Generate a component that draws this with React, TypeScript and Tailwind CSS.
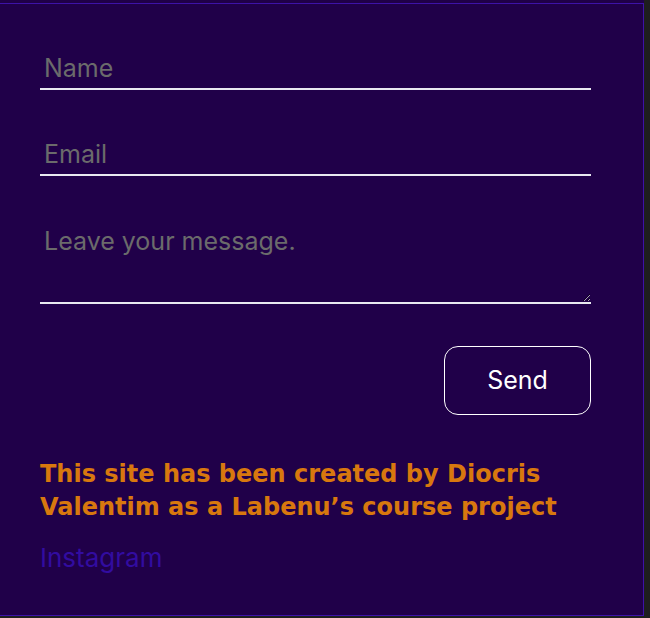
import React from "react";

export default function App() {
  return (
    <div className="w-[650px] h-[618px] bg-[#1e1e1e] overflow-hidden">
      <div className="w-[644px] h-[616px] bg-[#1f0047] pt-[3px]">
        <div className="h-[613px] bg-[#200049] border-t border-r border-b border-[#3d12a8] px-[40px]">
          <form className="w-[551px] flex flex-col pt-[46px]" style={{ fontFamily: "Inter, 'Liberation Sans', sans-serif" }}>
            <input
              placeholder="Name"
              className="h-[40px] bg-transparent border-b-2 border-[#e8e8f0] px-[4px] pb-[3px] text-[25px] text-white placeholder:text-[#6b6b6b] outline-none"
            />
            <input
              placeholder="Email"
              className="mt-[46px] h-[40px] bg-transparent border-b-2 border-[#e8e8f0] px-[4px] pb-[3px] text-[25px] text-white placeholder:text-[#6b6b6b] outline-none"
            />
            <textarea
              placeholder="Leave your message."
              className="mt-[46px] h-[82px] bg-transparent border-b-2 border-[#e8e8f0] px-[4px] pt-[4px] leading-[30px] text-[25px] text-white placeholder:text-[#6b6b6b] outline-none resize-y"
            />
            <div className="flex justify-end mt-[42px]">
              <button
                type="button"
                className="w-[147px] h-[69px] rounded-[14px] border border-white text-white text-[25px] bg-transparent pt-[1px]"
              >
                Send
              </button>
            </div>
          </form>
          <p
            className="mt-[43px] text-[#d8780e] text-[24px] font-bold leading-[33px]"
            style={{ fontFamily: "'DejaVu Sans', sans-serif" }}
          >
            This site has been created by Diocris
            <br />
            Valentim as a Labenu’s course project
          </p>
          <a
            className="block mt-[14px] text-[#320ca0] text-[26px]"
            style={{ fontFamily: "Inter, sans-serif" }}
          >
            Instagram
          </a>
        </div>
      </div>
    </div>
  );
}
